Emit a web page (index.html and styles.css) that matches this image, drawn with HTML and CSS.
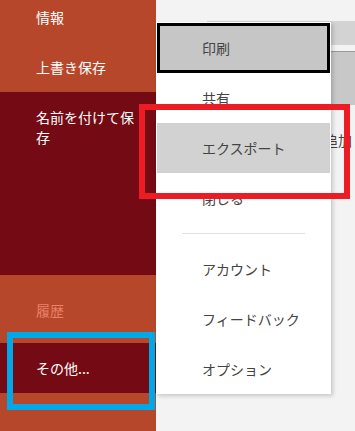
FILE: index.html
```html
<!DOCTYPE html>
<html>
<head>
  <title>バックステージ</title>
  <meta name="viewport" content="width=device-width, initial-scale=1.0">
  <link rel="stylesheet" href="styles.css">
</head>
<body>
  <div class="app">
    <div class="sidebar">
      <div class="nav-list">
        <div class="nav-item">情報</div>
        <div class="nav-item">上書き保存</div>
        <div class="nav-item active tall">名前を付けて保存</div>
        <div class="nav-item disabled history">履歴</div>
        <div class="nav-item active">その他...</div>
      </div>
    </div>

    <div class="main">
      <div class="main-top"></div>
      <div class="tab-strip"></div>
      <div class="tile-row"></div>
      <div class="main-label">場所の追加</div>

      <!-- flyout for "その他..." -->
      <div class="flyout">
        <div class="menu-item focused">印刷</div>
        <div class="menu-item">共有</div>
        <div class="menu-item hover">エクスポート</div>
        <div class="menu-item">閉じる</div>
        <div class="menu-sep"></div>
        <div class="menu-item">アカウント</div>
        <div class="menu-item">フィードバック</div>
        <div class="menu-item">オプション</div>
      </div>
    </div>
  </div>

  <!-- annotation boxes drawn over the screenshot -->
  <div class="mark mark-red"></div>
  <div class="mark mark-blue"></div>
</body>
</html>
```

FILE: styles.css
```css
body {
  margin: 0;
  width: 355px;
  height: 431px;
  overflow: hidden;
  position: relative;
  font-family: "Noto Sans CJK JP", "Noto Sans", sans-serif;
  font-size: 14px;
}
.app {
  display: flex;
  height: 431px;
}
.sidebar {
  width: 156px;
  flex-shrink: 0;
  background-color: #b7472a;
  overflow: hidden;
}
.nav-list {
  margin-top: -8px;
}
.nav-item {
  padding: 15px 20px 15px 36px;
  line-height: 20px;
  color: #fff;
}
.nav-item.active {
  background-color: #740b14;
}
.nav-item.tall {
  height: 168px;
  padding-bottom: 0;
}
.nav-item.history {
  padding-top: 25px;
  padding-bottom: 23px;
}
.nav-item.disabled {
  color: #e8806a;
}
.main {
  flex: 1;
  position: relative;
  background-color: #f3f3f3;
}
.main-top {
  height: 21px;
}
.tab-strip {
  height: 24px;
  margin-left: 51px;
  background-color: #d3d3d3;
}
.tile-row {
  height: 53px;
  margin-top: 6px;
  margin-left: 51px;
  border-top: 1px solid #999;
  background-color: #c8c8c8;
}
.main-label {
  margin-top: 25px;
  padding-left: 126px;
  line-height: 20px;
  color: #444;
  white-space: nowrap;
}
.flyout {
  position: absolute;
  left: 0;
  top: 22px;
  width: 175px;
  height: 372px;
  padding: 1px;
  box-sizing: border-box;
  background-color: #fff;
  box-shadow: 2px 2px 4px rgba(0, 0, 0, 0.18);
}
.menu-item {
  height: 50px;
  line-height: 50px;
  padding-left: 45px;
  color: #444;
  white-space: nowrap;
}
.menu-item.focused {
  background-color: #c6c6c6;
  border: 3px solid #000;
  height: 44px;
  line-height: 44px;
  padding-left: 42px;
}
.menu-item.hover {
  background-color: #d2d2d2;
}
.menu-sep {
  height: 1px;
  margin: 10px 25px;
  background-color: #e1e1e1;
}
.mark {
  position: absolute;
  box-sizing: border-box;
}
.mark-red {
  left: 139px;
  top: 104px;
  width: 211px;
  height: 95px;
  border: 6px solid #ed1c24;
}
.mark-blue {
  left: 7px;
  top: 332px;
  width: 148px;
  height: 78px;
  border: 6px solid #00a8e8;
}
```
